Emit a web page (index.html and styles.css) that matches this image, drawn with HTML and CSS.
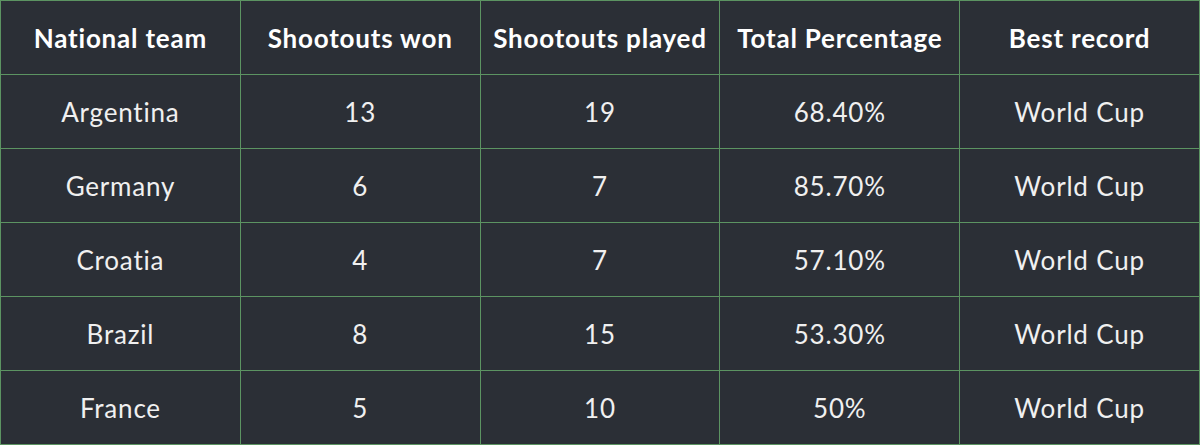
FILE: index.html
```html
<!DOCTYPE html>
<html>
<head>
<meta charset="utf-8">
<link rel="stylesheet" href="styles.css">
</head>
<body>
<table class="shootouts">
  <thead>
    <tr>
      <th>National team</th>
      <th>Shootouts won</th>
      <th>Shootouts played</th>
      <th>Total Percentage</th>
      <th>Best record</th>
    </tr>
  </thead>
  <tbody>
    <tr><td>Argentina</td><td>13</td><td>19</td><td>68.40%</td><td>World Cup</td></tr>
    <tr><td>Germany</td><td>6</td><td>7</td><td>85.70%</td><td>World Cup</td></tr>
    <tr><td>Croatia</td><td>4</td><td>7</td><td>57.10%</td><td>World Cup</td></tr>
    <tr><td>Brazil</td><td>8</td><td>15</td><td>53.30%</td><td>World Cup</td></tr>
    <tr><td>France</td><td>5</td><td>10</td><td>50%</td><td>World Cup</td></tr>
  </tbody>
</table>
</body>
</html>
```
FILE: styles.css
```css
html, body {
  margin: 0;
  padding: 0;
  background: #2b2f36;
}
.shootouts {
  width: 1200px;
  height: 445px;
  border-collapse: collapse;
  table-layout: fixed;
  background: #2b2f36;
  font-family: Lato, "Open Sans", sans-serif;
  color: #f0f0f0;
}
.shootouts th,
.shootouts td {
  border: 1px solid #5c9462;
  text-align: center;
  vertical-align: middle;
  padding: 0;
  font-size: 26px;
  letter-spacing: 0.8px;
  height: 73px;
  white-space: nowrap;
}
.shootouts th {
  font-weight: 700;
  color: #ffffff;
}
.shootouts td {
  font-weight: 400;
}
```
